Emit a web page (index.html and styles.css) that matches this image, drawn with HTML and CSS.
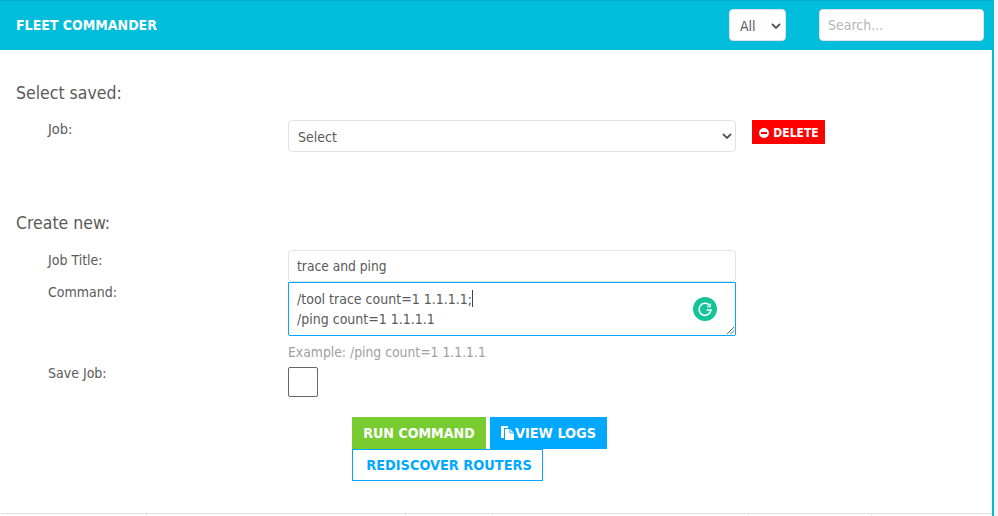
FILE: index.html
```html
<!DOCTYPE html>
<html lang="en">
<head>
<meta charset="utf-8">
<title>Fleet Commander</title>
<link rel="stylesheet" href="styles.css">
</head>
<body>
<div class="page">
  <header class="topbar">
    <span class="brand">FLEET COMMANDER</span>
    <div class="top-controls">
      <div class="select top-select"><span>All</span><svg class="chev" viewBox="0 0 10 6"><path d="M1 1l4 4 4-4" fill="none" stroke="#555" stroke-width="1.8"/></svg></div>
      <div class="search">Search...</div>
    </div>
  </header>
  <main class="content">
    <h2 class="section-title first">Select saved:</h2>
    <div class="row job-row">
      <label class="label">Job:</label>
      <div class="field select"><span class="select-text">Select</span><svg class="chev" viewBox="0 0 10 6"><path d="M1 1l4 4 4-4" fill="none" stroke="#555" stroke-width="1.8"/></svg></div>
      <button class="btn delete"><svg class="minus" viewBox="0 0 10 10"><circle cx="5" cy="5" r="5" fill="#fff"/><rect x="2" y="4" width="6" height="2" fill="#f00"/></svg>DELETE</button>
    </div>
    <h2 class="section-title second">Create new:</h2>
    <div class="row title-row">
      <label class="label">Job Title:</label>
      <div class="field input">trace and ping</div>
    </div>
    <div class="row command-row">
      <label class="label">Command:</label>
      <div class="command-col">
        <div class="field textarea">
          <div>/tool trace count=1 1.1.1.1;<span class="caret"></span></div>
          <div>/ping count=1 1.1.1.1</div>
          <svg class="grammarly" viewBox="0 0 24 24"><circle cx="12" cy="12" r="12" fill="#15c39a"/><path d="M16.6 8.4A6 6 0 1 0 18 13h-4.4" fill="none" stroke="#fff" stroke-width="1.6"/><path d="M17.4 6.4v3.4h-3.4" fill="none" stroke="#fff" stroke-width="1.1"/></svg>
          <svg class="grip" viewBox="0 0 8 8"><path d="M0 8L8 0M4 8L8 4" stroke="#555" stroke-width="1"/></svg>
        </div>
        <p class="hint">Example: /ping count=1 1.1.1.1</p>
      </div>
    </div>
    <div class="row save-row">
      <label class="label">Save Job:</label>
      <div class="checkbox"></div>
    </div>
    <div class="actions">
      <button class="btn run">RUN COMMAND</button>
      <button class="btn logs"><svg class="doc" viewBox="0 0 14 14"><path d="M0 0h7v2H3v10H0z" fill="#fff"/><path d="M4 3h5l4 4v7H4z" fill="#fff"/><path d="M9 3v4h4" fill="none" stroke="#00a8ff" stroke-width=".8"/></svg>VIEW LOGS</button>
      <button class="btn rediscover">REDISCOVER ROUTERS</button>
    </div>
  </main>
  <div class="table-edge">
    <span class="tick tick-a"></span><span class="tick tick-b"></span><span class="tick tick-c"></span><span class="tick tick-d"></span><span class="tick tick-e"></span>
  </div>
</div>
</body>
</html>
```
FILE: styles.css
```css
* { box-sizing: border-box; }
html, body { margin: 0; height: 516px; overflow: hidden; background: #f6f6f6; }
body { font-family: "DejaVu Sans Condensed", "DejaVu Sans", Verdana, sans-serif; font-stretch: condensed; font-size: 14px; color: #5a5a5a; }
.page { width: 994px; height: 516px; background: #fff; border-right: 2px solid #00bcd9; position: relative; }
.topbar { height: 50px; background: #00bddb; border-top: 1px solid #00aecb; display: flex; align-items: center; justify-content: space-between; padding: 0 8px 2px 16px; }
.brand { color: #fff; font-weight: 700; font-size: 14px; }
.top-controls { display: flex; align-items: center; gap: 33px; }
.select { display: flex; align-items: center; justify-content: space-between; background: #fff; }
.select-text { padding-top: 2px; }
.top-select { width: 57px; height: 32px; border-radius: 4px; padding: 2px 4px 0 10px; border: 1px solid #e2e2e2; }
.search { width: 165px; height: 32px; background: #fff; border: 1px solid #e2e2e2; border-radius: 4px; padding: 0 8px; line-height: 30px; color: #b5b5b5; }
.chev { width: 10px; height: 6px; }
.content { padding: 0 0 0 16px; }
.section-title { margin: 0; font-size: 17.5px; font-weight: 400; line-height: 20px; }
.section-title.first { padding-top: 33px; }
.section-title.second { margin-top: 61px; }
.row { display: flex; align-items: flex-start; }
.label { width: 272px; padding-left: 32px; line-height: 18px; }
.job-row { margin-top: 17px; }
.job-row .label { font-size: 14.5px; }
.field { width: 448px; border: 1px solid #e2e2e2; border-radius: 4px; background: #fff; }
.job-row .field { height: 32px; padding: 0 3px 0 9px; }
.btn { border: 0; border-radius: 0; font-family: inherit; font-stretch: condensed; font-weight: 700; font-size: 14.4px; color: #fff; padding: 0; display: flex; align-items: center; justify-content: center; }
.delete { width: 73px; height: 24px; margin-left: 16px; background: #f00; font-size: 12px; gap: 4px; padding: 1px 0 0 1px; }
.minus { width: 10px; height: 10px; }
.title-row { margin-top: 17px; }
.input { height: 32px; line-height: 30px; padding: 0 8px; font-size: 13.7px; }
.command-col { width: 448px; }
.title-row .label, .command-row .label { padding-top: 1px; }
.textarea { position: relative; height: 54px; border: 1px solid #00a8ff; border-radius: 0 0 2px 2px; padding: 6px 8px 0; line-height: 20px; }
.caret { display: inline-block; width: 1px; height: 17px; background: #444; vertical-align: -3px; }
.grammarly { position: absolute; right: 18px; top: 14px; width: 24px; height: 24px; }
.grip { position: absolute; right: 1px; bottom: 1px; width: 7px; height: 7px; }
.hint { margin: 8px 0 0; font-size: 13.8px; line-height: 17px; color: #a0a0a0; }
.save-row { margin-top: 6px; }
.save-row .label { margin-top: -3px; }
.checkbox { width: 30px; height: 30px; border: 1px solid #666; border-radius: 2px; background: #fff; }
.actions { display: flex; flex-wrap: wrap; width: 270px; margin: 20px 0 0 336px; column-gap: 4px; }
.run { width: 134px; height: 32px; background: #78cc32; font-size: 14.1px; }
.logs { width: 117px; height: 32px; background: #00a8ff; }
.doc { width: 14px; height: 14px; }
.rediscover { width: 191px; height: 32px; background: #fff; color: #00a8ff; border: 1px solid #00a8ff; padding-left: 3px; }
.table-edge { position: absolute; left: 1px; right: 0; bottom: 0; height: 3px; border-top: 1px solid #e0e0e0; }
.tick { position: absolute; top: 0; width: 1px; height: 2px; background: #e8e8e8; }
.tick-a { left: 145px; } .tick-b { left: 404px; } .tick-c { left: 491px; } .tick-d { left: 747px; } .tick-e { left: 870px; }
```
